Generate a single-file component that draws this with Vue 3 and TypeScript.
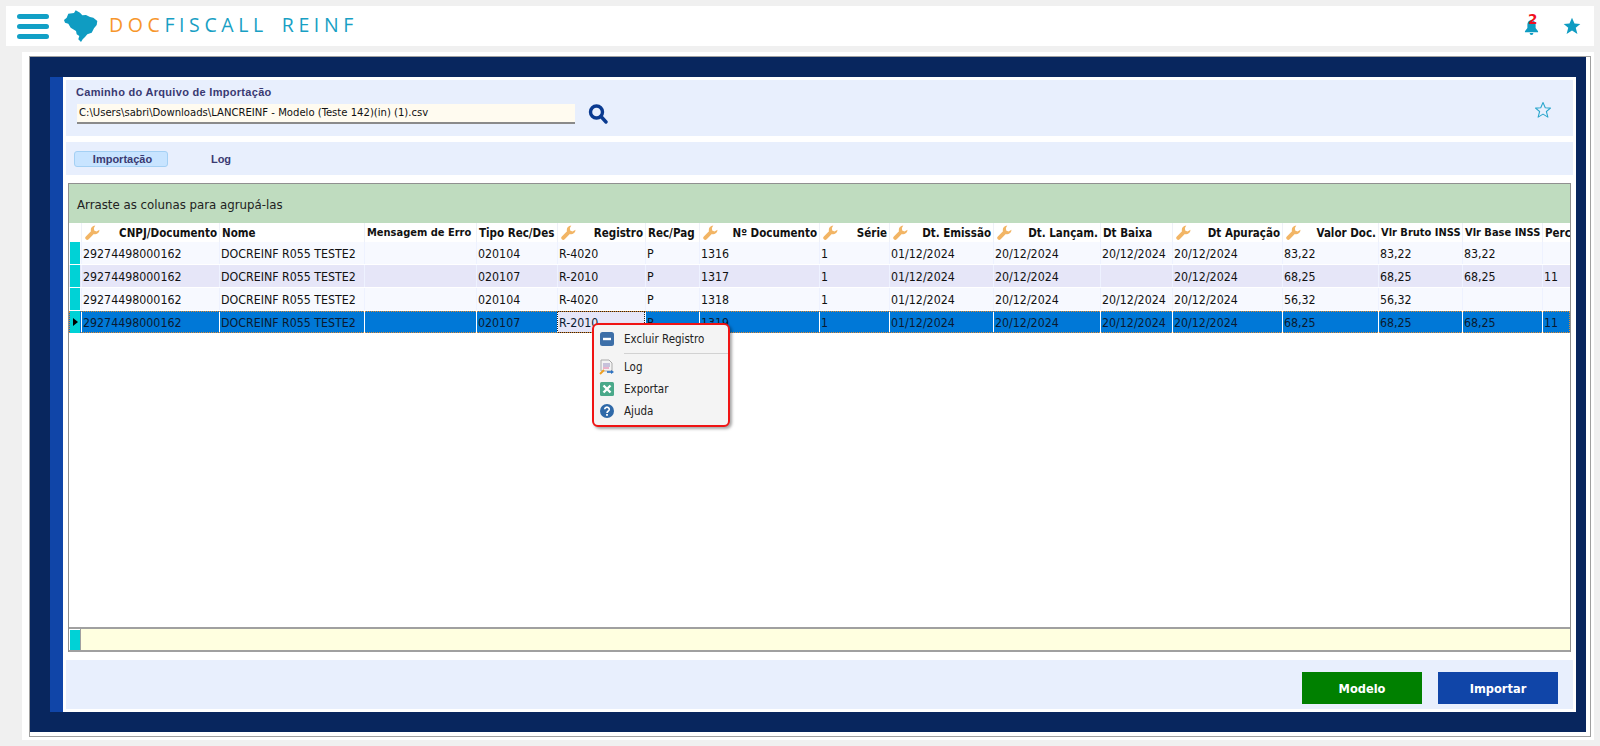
<script setup lang="ts">
interface Col { label: string; key?: boolean; tight?: boolean }
const cols: Col[] = [
  { label: 'CNPJ/Documento', key: true },
  { label: 'Nome' },
  { label: 'Mensagem de Erro', tight: true },
  { label: 'Tipo Rec/Des' },
  { label: 'Registro', key: true },
  { label: 'Rec/Pag' },
  { label: 'Nº Documento', key: true },
  { label: 'Série', key: true },
  { label: 'Dt. Emissão', key: true },
  { label: 'Dt. Lançam.', key: true },
  { label: 'Dt Baixa' },
  { label: 'Dt Apuração', key: true },
  { label: 'Valor Doc.', key: true },
  { label: 'Vlr Bruto INSS', tight: true },
  { label: 'Vlr Base INSS', tight: true },
  { label: 'Perc' }
]
const n = 'DOCREINF R055 TESTE2'
const c = '29274498000162'
const e = '01/12/2024'
const d = '20/12/2024'
const rows: string[][] = [
  [c, n, '', '020104', 'R-4020', 'P', '1316', '1', e, d, d, d, '83,22', '83,22', '83,22', ''],
  [c, n, '', '020107', 'R-2010', 'P', '1317', '1', e, d, '', d, '68,25', '68,25', '68,25', '11'],
  [c, n, '', '020104', 'R-4020', 'P', '1318', '1', e, d, d, d, '56,32', '56,32', '', ''],
  [c, n, '', '020107', 'R-2010', 'P', '1319', '1', e, d, d, d, '68,25', '68,25', '68,25', '11']
]
const wrench = 'M11 .5a4.800 4.800 0 0 0-4.600 6.200L.9 12.200a2.100 2.100 0 0 0 3 3L9.400 9.600A4.800 4.800 0 0 0 15.500 5l-3.300 2-2.400-1.200-.3-2.600z'
const star = '12 2 15 9 22 9.500 16.500 14 18.500 21.500 12 17.500 5.500 21.500 7.500 14 2 9.500 9 9'
</script>

<template>
  <div class="page">
    <header class="topbar">
      <div class="burger"><i></i><i></i><i></i></div>
      <svg class="brazil" viewBox="0 0 34 32" width="34" height="32">
        <path fill="#0f9cc2" d="M0 10 2.700 7.700 4.300 3.700 10 3 11.700.3 16 2.700 18.300 5.300 22 5 26 7 29.300 7.700 33.300 11 32.700 15 30 18.300 27.700 22.700 23.300 24.300 21 27 18.700 29.300 17 32 14.300 29.300 15.300 26 12.700 24.300 12 21 6.700 17.700 4.300 13.700 1 12.700Z" />
      </svg>
      <div class="brand"><span class="doc">DOC</span>FISCALL<span class="reinf">REINF</span></div>
      <div class="top-icons">
        <div class="bell">
          <svg viewBox="0 0 16 18" width="15" height="17">
            <path fill="#0f9cc2" d="M8 2c-3 0-4.400 2.400-4.400 5v3.500L1 14v1h14v-1l-2.600-3.500V7C12.400 4.400 11 2 8 2zM6 16a2 2 0 0 0 4 0z" />
          </svg>
          <b>2</b>
        </div>
        <svg viewBox="0 0 24 24" width="20" height="20"><polygon fill="#0f9cc2" :points="star" /></svg>
      </div>
    </header>

    <main class="card">
      <div class="frame">
        <div class="navy">
          <div class="strip"></div>
          <div class="panel">
            <section class="path-box">
              <div class="path-main">
                <label class="path-label">Caminho do Arquivo de Importação</label>
                <div class="path-row">
                  <div class="path-input">C:\Users\sabri\Downloads\LANCREINF - Modelo (Teste 142)(in) (1).csv</div>
                  <svg class="search" viewBox="0 0 20 20" width="20" height="20">
                    <circle cx="8.500" cy="8" r="6" fill="none" stroke="#0a3a90" stroke-width="3.400" />
                    <line x1="13" y1="12.500" x2="18" y2="18" stroke="#0a3a90" stroke-width="3.400" stroke-linecap="round" />
                  </svg>
                </div>
              </div>
              <svg class="fav" viewBox="0 0 24 24" width="18" height="18">
                <polygon fill="none" stroke="#2aa6cc" stroke-width="1.400" stroke-linejoin="round" :points="star" />
              </svg>
            </section>

            <nav class="tabs">
              <span class="tab active">Importação</span>
              <span class="tab">Log</span>
            </nav>

            <section class="grid">
              <div class="group">Arraste as colunas para agrupá-las</div>
              <div class="body">
                <div class="tr head">
                  <div class="ind blank"></div>
                  <div v-for="col in cols" :key="col.label" class="th" :class="{ keyed: col.key, tight: col.tight }">
                    <svg v-if="col.key" class="wrench" viewBox="0 0 16 16" width="15" height="15">
                      <path fill="#f2b565" :d="wrench" />
                    </svg>
                    <span>{{ col.label }}</span>
                  </div>
                </div>
                <div v-for="(row, r) in rows" :key="r" class="tr row" :class="{ even: r === 1, sel: r === 3 }">
                  <div class="ind"><span v-if="r === 3" class="arrow"></span></div>
                  <div v-for="(v, i) in row" :key="i" class="td" :class="{ focus: r === 3 && i === 4 }">{{ v }}</div>
                </div>
              </div>
              <div class="summary">
                <div class="sum-ind"><span></span></div>
                <div class="sum-main"></div>
              </div>

              <div class="menu">
                <div class="mi">
                  <svg viewBox="0 0 14 14" width="14" height="14">
                    <rect width="14" height="14" rx="2.500" fill="#3d6fa8" />
                    <rect x="3" y="5.800" width="8" height="2.400" fill="#fff" />
                  </svg>
                  <span>Excluir Registro</span>
                </div>
                <div class="sep"></div>
                <div class="mi log">
                  <svg viewBox="0 0 16 16" width="16" height="16">
                    <path d="M2 1h8l3 3v8H2z" fill="#f4f4f4" stroke="#aaa" />
                    <path d="M4 5h7M4 7h7" stroke="#9a8fc0" />
                    <path d="M4 9h6" stroke="#e070a0" />
                    <path d="M1 15l4-4" stroke="#f0a020" stroke-width="2" />
                    <path d="M8 13h5" stroke="#2a70c0" stroke-width="1.600" />
                    <path d="M12 11l3 2-3 2z" fill="#2a70c0" />
                  </svg>
                  <span>Log</span>
                </div>
                <div class="mi x">
                  <svg viewBox="0 0 14 14" width="14" height="14">
                    <rect width="14" height="14" rx="1.500" fill="#4aa98a" />
                    <path d="M3.500 3.500l7 7M10.500 3.500l-7 7" stroke="#fff" stroke-width="2.400" />
                  </svg>
                  <span>Exportar</span>
                </div>
                <div class="mi q">
                  <svg viewBox="0 0 14 14" width="14" height="14">
                    <circle cx="7" cy="7" r="7" fill="#2f69a8" />
                    <path d="M4.700 5.200a2.300 2.100 0 1 1 3.600 1.800C7.500 7.600 7 8 7 9" fill="none" stroke="#fff" stroke-width="1.600" />
                    <rect x="6.100" y="10" width="1.800" height="1.800" fill="#fff" />
                  </svg>
                  <span>Ajuda</span>
                </div>
              </div>
            </section>

            <section class="actions">
              <button class="btn green">Modelo</button>
              <button class="btn blue">Importar</button>
            </section>
          </div>
        </div>
      </div>
    </main>
  </div>
</template>

<style>
html, body { margin: 0; background: #f0f0f0; }
</style>

<style scoped>
.page { width: 1600px; height: 746px; overflow: hidden; background: #f0f0f0; box-sizing: border-box; padding: 6px; font-family: "DejaVu Sans Condensed", "DejaVu Sans", sans-serif; }

.topbar { height: 40px; background: #fff; display: flex; align-items: center; padding-left: 11px; padding-right: 12px; }
.burger { width: 32px; display: flex; flex-direction: column; gap: 5px; }
.burger i { display: block; height: 5px; border-radius: 3px; background: #12a0c6; }
.brazil { margin-left: 15px; }
.brand { margin: -2px 0 0 11px; font-family: "Open Sans", sans-serif; font-weight: 500; font-size: 19.500px; letter-spacing: 4.600px; color: #18a0c4; line-height: 1; }
.doc { color: #f7962b; }
.reinf { margin-left: 14px; }
.top-icons { margin-left: auto; display: flex; align-items: center; gap: 23px; }
.bell { position: relative; width: 15px; height: 17px; margin-top: 1px; }
.bell svg { display: block; }
.bell b { position: absolute; left: 4px; top: -6px; color: #f01020; font: bold 13.500px/14px "DejaVu Sans", sans-serif; }

.card { margin: 6px 0 0 16px; height: 688px; background: #fff; box-sizing: border-box; padding: 4px 3px 3px 7px; }
.frame { height: 100%; box-sizing: border-box; border: 1px solid #a0a0a0; padding: 0 4px 4px 0; }
.navy { height: 100%; box-sizing: border-box; background: #08265e; padding: 20px 10px 20px 20px; display: flex; }
.strip { width: 13px; background: #1045a8; flex: none; }
.panel { flex: 1; min-width: 0; background: #fff; padding: 3px; display: flex; flex-direction: column; }

.path-box { height: 56px; flex: none; background: #e8effd; display: flex; box-sizing: border-box; padding: 5px 21px 0 10px; justify-content: space-between; }
.path-label { display: block; font: bold 11px/14px "Liberation Sans", sans-serif; letter-spacing: .3px; color: #3a3a72; }
.path-row { display: flex; align-items: flex-start; margin-top: 3px; }
.path-input { width: 498px; height: 20px; margin: 2px 0 0 1px; box-sizing: border-box; background: #fffbf0; border-bottom: 2px solid #8a8a8a; font-size: 11.200px; line-height: 18px; padding-left: 2px; color: #111; }
.search { margin: 2px 0 0 13px; }
.fav { margin-top: 16px; }

.tabs { height: 33px; flex: none; margin-top: 6px; background: #e8effd; display: flex; align-items: center; padding-left: 8px; font: bold 11px/14px "Liberation Sans", sans-serif; color: #3a3a72; }
.tab { width: 94px; height: 16px; box-sizing: border-box; display: flex; align-items: center; justify-content: center; border: 1px solid transparent; }
.tab.active { background: #c8e4ff; border-color: #a4d0f4; border-radius: 3px; padding-left: 3px; }
.tab:not(.active) { width: 60px; margin-left: 23px; }

.grid { position: relative; flex: 1; min-height: 0; margin: 8px 2px 0; border: 1px solid #909090; border-bottom: 0; display: flex; flex-direction: column; overflow: visible; }
.group { height: 39px; flex: none; background: #bfdcbf; font-size: 13.100px; line-height: 41px; padding-left: 8px; color: #222; }
.body { flex: 1; min-height: 0; background: #fff; overflow: hidden; }
.tr { display: grid; grid-template-columns: 12px 138px 145px 112px 81px 88px 54px 120px 70px 104px 107px 72px 110px 96px 84px 80px 28px; }
.head { height: 19px; background: #fff; }
.th { display: flex; align-items: center; justify-content: flex-start; box-sizing: border-box; padding: 0 2px 0 2px; border-left: 1px solid #eef1f8; font-size: 11.500px; font-weight: 700; color: #111; white-space: nowrap; overflow: hidden; }
.th.keyed { justify-content: space-between; }
.th.tight { font-size: 11px; }
.wrench { flex: none; margin-left: 1px; }
.row { height: 22px; margin-bottom: 1px; background: #f7f9ff; }
.row.even { background: #e6e6f8; }
.row.sel { background: #0078d7; outline: 1px dotted #e08a30; outline-offset: -1px; }
.td { box-sizing: border-box; padding-left: 1px; border-left: 1px solid #eef2ff; font-size: 12.300px; line-height: 24px; color: #111; white-space: nowrap; overflow: hidden; }
.row.sel .td { border-left-color: #fff; color: #0a1a30; }
.td.focus { background: #e6e6f8; outline: 1px dotted #222; outline-offset: -1px; }
.ind { background: #00d2d6; margin-left: 1px; margin-right: 1px; position: relative; }
.ind.blank { background: #fff; }
.arrow { position: absolute; left: 3px; top: 7px; border-left: 5px solid #000; border-top: 4px solid transparent; border-bottom: 4px solid transparent; }

.summary { height: 25px; flex: none; box-sizing: border-box; display: flex; border-top: 2px solid #a0a0a0; border-bottom: 2px solid #a0a0a0; background: #fff; }
.sum-ind { width: 12px; box-sizing: border-box; padding: 1px 1px 0; border-right: 1px solid #a0a0a0; flex: none; }
.sum-ind span { display: block; height: 20px; width: 10px; background: #00d2d6; }
.sum-main { flex: 1; background: #ffffe0; }

.menu { position: absolute; left: 523px; top: 139px; width: 138px; height: 104px; box-sizing: border-box; background: #f4f4f4; border: 2px solid #f01414; border-radius: 6px; box-shadow: 2px 2px 3px rgba(0,0,0,.35); padding-top: 3px; color: #222; font-size: 11.500px; }
.mi { height: 22px; display: flex; align-items: center; padding-left: 6px; gap: 10px; }
.mi.log { margin-top: 2px; padding-left: 5px; gap: 9px; }
.sep { height: 1px; background: #d2d2d2; margin: 3px 0 0 30px; }

.actions { height: 49px; flex: none; margin-top: 8px; background: #e8effd; display: flex; justify-content: flex-end; gap: 16px; padding: 12px 15px 0 0; box-sizing: border-box; }
.btn { width: 120px; height: 32px; border: 0; padding: 0; color: #fff; font: bold 12.700px "DejaVu Sans Condensed", "DejaVu Sans", sans-serif; }
.green { background: #008000; }
.blue { background: #1045a8; }
</style>
